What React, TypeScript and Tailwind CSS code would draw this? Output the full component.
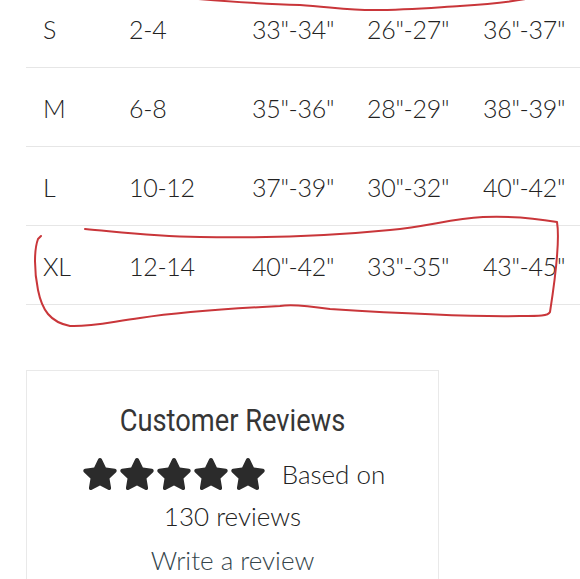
import { FaStar } from 'react-icons/fa'

const ROWS = [
  ['S', '2-4', '33"-34"', '26"-27"', '36"-37"'],
  ['M', '6-8', '35"-36"', '28"-29"', '38"-39"'],
  ['L', '10-12', '37"-39"', '30"-32"', '40"-42"'],
  ['XL', '12-14', '40"-42"', '33"-35"', '43"-45"'],
]

function SizeTable() {
  return (
    <div className="-mt-[11px] ml-[26px]">
      {ROWS.map((row) => (
        <div
          key={row[0]}
          className="grid h-[79px] grid-cols-[86px_123px_115px_116px_1fr] items-center border-b border-[#e6e6e6] pl-[17px] pt-[2px] text-[25px] font-light leading-none tracking-[-0.3px] text-[#222222]"
        >
          {row.map((cell, i) => (
            <span key={i} className="whitespace-nowrap">
              {cell}
            </span>
          ))}
        </div>
      ))}
    </div>
  )
}

function Reviews() {
  return (
    <div className="ml-[26px] mt-[65px] w-[413px] border border-[#e9e9e9] pb-10 pt-[34px] text-center font-light">
      <h2 className="origin-center scale-x-[0.88] font-['Roboto',sans-serif] text-[31px] font-normal leading-none text-[#363636]">
        Customer Reviews
      </h2>
      <div className="mt-[17px] flex items-center justify-center gap-[16px] pl-[2px]">
        <div className="flex gap-px text-[#2b2b2b]">
          {Array.from({ length: 5 }, (_, i) => (
            <FaStar key={i} size={36} />
          ))}
        </div>
        <span className="text-[26px] leading-[42px] text-[#222222]">Based on</span>
      </div>
      <p className="text-[26px] leading-[42px] text-[#222222]">130 reviews</p>
      <p className="mt-[2px] text-[26px] leading-[42px] text-[#34454b]">Write a review</p>
    </div>
  )
}

// hand-drawn red marks lying over the screenshot
function Marks() {
  return (
    <svg
      className="pointer-events-none absolute left-0 top-0"
      width="580"
      height="579"
      viewBox="0 0 580 579"
      fill="none"
      stroke="#c9363a"
      strokeWidth="2"
      strokeLinecap="round"
      strokeLinejoin="round"
    >
      <path d="M175,-3 C220,1 260,4 300,5 C330,7 350,10 373,10 C410,10 440,7 460,6 C490,4 515,2 535,-3" />
      <path d="M85,229 C120,232 150,236 200,237 C260,238 330,236 390,230 C430,226 450,219 483,217 C510,216 540,219 557,222 C560,240 555,280 550,312 C548,316 540,316 520,316 C470,317 410,314 330,309 C310,306 290,304 280,306 C240,308 180,312 140,318 C110,322 90,327 70,326 C50,322 42,310 38,290 C34,270 34,250 38,239 L41,236" />
    </svg>
  )
}

export default function App() {
  return (
    <div className="relative h-[579px] w-[580px] overflow-hidden bg-white font-['Lato',sans-serif]">
      <SizeTable />
      <Reviews />
      <Marks />
    </div>
  )
}
